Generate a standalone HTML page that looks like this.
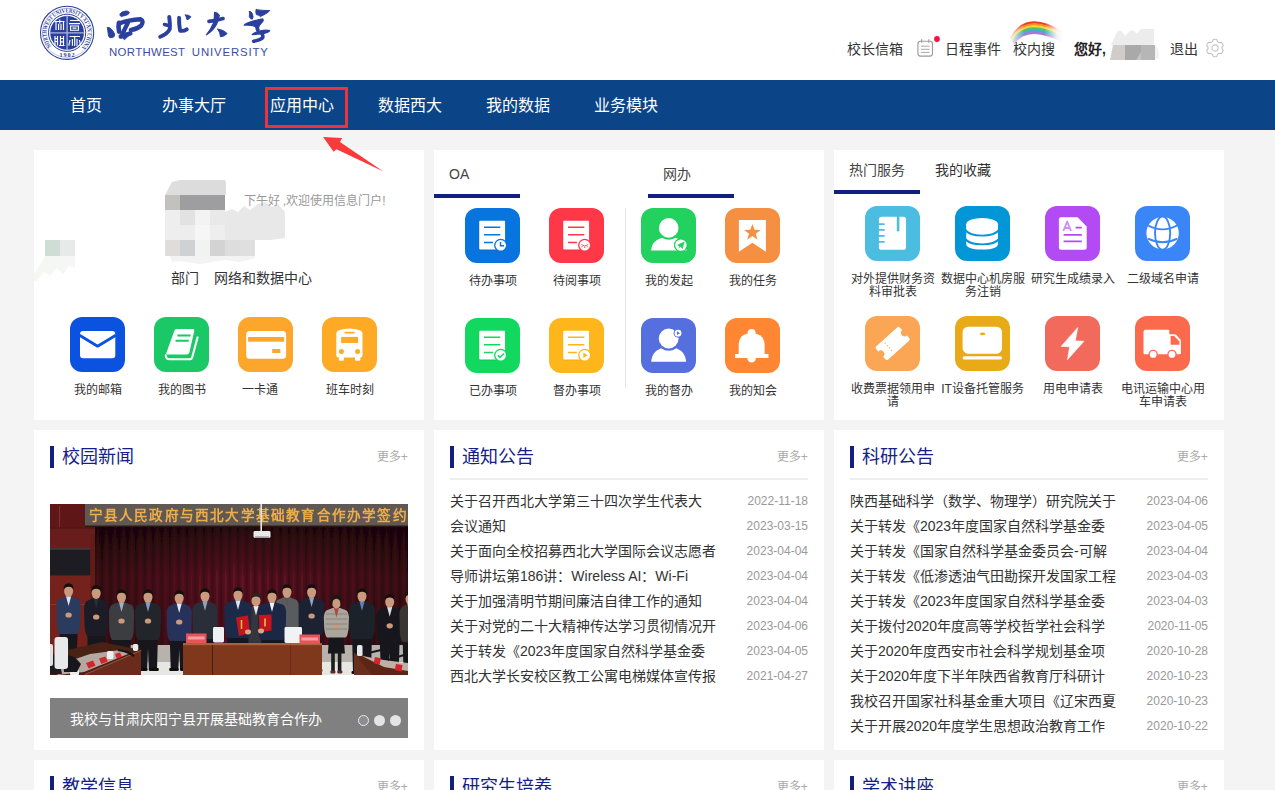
<!DOCTYPE html>
<html lang="zh-CN">
<head>
<meta charset="utf-8">
<title>西北大学信息门户</title>
<style>
*{margin:0;padding:0;box-sizing:border-box;}
html,body{width:1275px;height:790px;overflow:hidden;background:#f4f4f4;}
body{font-family:"Liberation Sans",sans-serif;color:#333;position:relative;font-size:14px;}
.abs{position:absolute;}
#hdr{position:absolute;left:0;top:0;width:1275px;height:80px;background:#fff;}
#nav{position:absolute;left:0;top:80px;width:1275px;height:50px;background:#0b4487;}
#nav span{position:absolute;top:0;height:50px;line-height:51px;font-size:16px;color:#fff;white-space:nowrap;}
.card{position:absolute;background:#fff;}
.t{position:absolute;white-space:nowrap;color:#333;}
.t14{font-size:14px;line-height:20px;height:20px;}
.t12{font-size:12px;line-height:16px;height:16px;}
.ic{position:absolute;width:55px;height:55px;border-radius:12px;overflow:hidden;}
.ic svg{position:absolute;left:0;top:0;width:55px;height:55px;display:block;}
.lb{position:absolute;width:90px;text-align:center;font-size:12px;line-height:13.6px;color:#333;}
.ul{position:absolute;height:4px;width:86px;background:#111f82;}
.hbar{position:absolute;width:4px;height:22px;background:#111f82;}
.htit{position:absolute;font-size:18px;line-height:26px;height:26px;color:#14208a;white-space:nowrap;}
.more{position:absolute;font-size:12px;line-height:16px;height:16px;color:#aaa;white-space:nowrap;}
.sep{position:absolute;height:2px;background:#eee;}
.li{position:absolute;font-size:14px;line-height:25px;height:25px;color:#333;white-space:nowrap;}
.dt{position:absolute;font-size:12px;line-height:25px;height:25px;color:#999;white-space:nowrap;text-align:right;width:80px;}
</style>
</head>
<body>
<!-- HEADER -->
<div id="hdr">
<!-- emblem -->
<svg class="abs" style="left:38px;top:3px" width="60" height="60" viewBox="0 0 60 60">
<g fill="none" stroke="#2b409e">
<circle cx="29.1" cy="29.8" r="26.6" stroke-width="1.1"/>
<circle cx="29.1" cy="29.8" r="24.6" stroke-width="0.5" opacity=".6"/>
<circle cx="29.1" cy="29.8" r="18.6" stroke-width="1"/>
</g>
<circle cx="29.1" cy="29.8" r="16.9" fill="#2b409e"/>
<g stroke="#aab3dc" stroke-width="1.3"><path d="M29.1 12.5V47.1M11.8 29.8H46.4"/></g>
<defs><path id="arcT" d="M13.9 43.6A20.4 20.4 0 1 1 44.3 43.6"/></defs>
<text font-family="Liberation Serif,serif" font-size="6.2" font-weight="bold" fill="#2b409e"><textPath href="#arcT" startOffset="0.5" textLength="94" lengthAdjust="spacingAndGlyphs">NORTHWEST UNIVERSITY XI'AN CHINA</textPath></text>
<text font-family="Liberation Serif,serif" font-size="6.2" font-weight="bold" fill="#2b409e" x="29.4" y="54.3" text-anchor="middle" letter-spacing="0.9">1902</text>
<!-- seal characters -->
<g fill="none" stroke="#fff" stroke-width="1.15">
<path d="M16.5 18.5h10M18 18.5v8.5M25.5 18.5v8.5M20.6 20.8v6.2M23 20.8v6.2M21.8 16.5v4"/>
<path d="M32 17.5h9M31 20.6h11M32.6 23v4.2h7.8V23zM34.5 25.1h4"/>
<path d="M17 33v9.5M19.5 33v9.5M17 35.5h2.5M17 38.5h2.5M22.5 33v9.5M25.5 33v9.5M22.5 35.5h3M22.5 38.8h3M21 42.5h5.5"/>
<path d="M31.5 33.5h10.5M36.7 33.5v9.5M34.4 36v6.8M32 37l-1.2 5.6M39 36v6.8M41.4 37l1.2 5.6"/>
</g>
</svg>
<!-- calligraphy 西北大学 : traced in 14.167x zoom coords -->
<svg class="abs" style="left:104px;top:6px" width="180" height="40" viewBox="0 0 2550 567">
<g fill="#2b409e" stroke="#2b409e" stroke-linecap="round" stroke-linejoin="round">
<!-- 西 -->
<path d="M228 112Q240 82 300 72Q352 64 358 92Q358 118 318 130Q270 142 242 150Q220 142 228 112Z" stroke-width="12"/>
<path d="M48 305Q72 292 112 336Q160 392 150 426Q130 456 86 450Q56 440 58 390Q50 340 48 305Z" stroke-width="12"/>
<path d="M212 238Q196 300 214 362" fill="none" stroke-width="66"/>
<path d="M210 248Q350 196 516 188Q572 214 524 280Q462 332 380 338" fill="none" stroke-width="63"/>
<path d="M338 238Q296 322 250 418" fill="none" stroke-width="61"/>
<path d="M238 432Q300 412 372 388" fill="none" stroke-width="66"/>
<path d="M262 440L360 410L292 476Z" stroke-width="14"/>
<!-- 北 -->
<path d="M924 156Q938 250 932 326Q900 396 796 436" fill="none" stroke-width="56"/>
<path d="M856 262L930 280" fill="none" stroke-width="49"/>
<path d="M1064 168Q1060 260 1078 350Q1130 360 1172 330" fill="none" stroke-width="56"/>
<path d="M1154 128Q1200 122 1230 152Q1214 186 1176 194Q1168 160 1154 128Z" stroke-width="14"/>
<!-- 大 (offset 1275) -->
<g transform="translate(1275 0)">
<path d="M212 218Q320 208 412 178" fill="none" stroke-width="51"/>
<path d="M292 92Q330 92 358 132Q348 200 318 262Q270 350 176 408Q240 330 272 250Q296 170 292 92Z" stroke-width="18"/>
<path d="M338 328Q430 340 468 392Q440 426 376 438Q372 378 338 328Z" stroke-width="14"/>
<!-- 学 -->
<path d="M786 78Q812 70 828 110Q846 160 828 186Q796 190 784 150Q790 110 786 78Z" stroke-width="14"/>
<path d="M882 52Q980 66 1074 64Q1060 92 940 150Q930 128 884 122Q868 84 882 52Z" stroke-width="14"/>
<path d="M712 272Q740 240 840 214Q930 190 972 184Q992 200 966 228Q920 262 900 320Q860 260 712 272Z" stroke-width="18"/>
<path d="M930 240Q880 290 904 338" fill="none" stroke-width="54"/>
<path d="M826 404Q860 372 940 354Q1020 336 1072 348Q1060 378 980 390Q900 402 826 404Z" stroke-width="18"/>
<path d="M962 392Q984 428 972 452Q930 486 846 500" fill="none" stroke-width="51"/>
</g>
</g>
</svg>
<div class="abs" id="nwu" style="left:109px;top:43.5px;font-size:11.4px;line-height:16px;color:#3a4da6;white-space:nowrap;letter-spacing:0.35px;">NORTHWEST<span style="letter-spacing:0.85px;margin-left:6.5px;">UNIVERSITY</span></div>
<!-- right menu -->
<div class="t t14" style="left:847px;top:39px;">校长信箱</div>
<svg class="abs" style="left:915px;top:36px" width="26" height="24" viewBox="0 0 26 24">
<rect x="2.9" y="5.3" width="14.6" height="14.8" rx="2.6" fill="#fff" stroke="#9a9a9a" stroke-width="1.1"/>
<path d="M6.6 3.2v3.6M13.8 3.2v3.6" stroke="#9a9a9a" stroke-width="1.1" fill="none"/>
<path d="M5.8 10.2h8.8M5.8 13.3h8.8M5.8 16.4h8.8" stroke="#a8a8a8" stroke-width="1" fill="none"/>
<circle cx="22" cy="3" r="2.9" fill="#f5123e"/>
</svg>
<div class="t t14" style="left:945px;top:39px;">日程事件</div>
<!-- rainbow -->
<svg class="abs" style="left:1006px;top:13.5px" width="58" height="30" viewBox="0 0 58 30">
<defs>
<linearGradient id="rbf" x1="0" x2="1" y1="0" y2="0"><stop offset="0" stop-color="#fff" stop-opacity="1"/><stop offset=".1" stop-color="#fff" stop-opacity=".8"/><stop offset=".32" stop-color="#fff" stop-opacity="0"/><stop offset=".66" stop-color="#fff" stop-opacity="0"/><stop offset=".88" stop-color="#fff" stop-opacity=".9"/><stop offset="1" stop-color="#fff" stop-opacity="1"/></linearGradient>
<filter id="rbb" x="-10%" y="-10%" width="120%" height="120%"><feGaussianBlur stdDeviation="0.6"/></filter>
</defs>
<g fill="none" stroke-width="2.5" filter="url(#rbb)">
<path d="M5.0 24.5Q20 -4.0 56 18.5" stroke="#ef3a24"/>
<path d="M5.5 25.5Q20 -1.3 56 20.1" stroke="#f6922a"/>
<path d="M6.0 26.5Q20 1.4 56 21.7" stroke="#f0d93c"/>
<path d="M6.5 27.5Q20 4.1 56 23.3" stroke="#58c06a"/>
<path d="M7.0 28.5Q20 6.8 56 24.9" stroke="#3fb0c8"/>
<path d="M7.5 29.5Q20 9.5 56 26.5" stroke="#a07bd2"/>
</g>
<rect x="0" y="0" width="58" height="30" fill="url(#rbf)"/>
</svg>
<div class="t t14" style="left:1013px;top:39px;">校内搜</div>
<div class="t t14" style="left:1074px;top:39px;font-weight:bold;color:#222;">您好,</div>
<!-- blurred name mosaic -->
<svg class="abs" style="left:1108px;top:28px" width="56" height="34" viewBox="0 0 56 34">
<path d="M3 17L9 4Q12 1 15 5L17 8L22 3Q25 1 27 4L29 6L33 1H46V17Z" fill="#ececec"/>
<rect x="2" y="17" width="15" height="15" fill="#cfccc9"/>
<rect x="17" y="17" width="16" height="15" fill="#a9a9a9"/>
<rect x="33" y="17" width="14" height="15" fill="#b6b6b6"/>
<path d="M2 32L5 17H2Z" fill="#fff"/>
<path d="M47 17Q52 22 51 30L47 32Z" fill="#f1f2f6"/>
<path d="M28 32L33 24V32Z" fill="#c4c4c4"/>
</svg>
<div class="t t14" style="left:1170px;top:39px;">退出</div>
<!-- gear -->
<svg class="abs" style="left:1204px;top:37px" width="22" height="22" viewBox="0 0 22 22">
<g fill="none" stroke="#c4c4c4" stroke-width="1.1" stroke-linejoin="round">
<path d="M9.2 2.6Q11 1.8 12.8 2.6L13.6 4.7Q14.6 5.2 15.3 5.8L17.5 5.4Q18.9 6.8 19.3 8.6L17.9 10.3Q18 11 17.9 11.7L19.3 13.4Q18.9 15.2 17.5 16.6L15.3 16.2Q14.6 16.9 13.6 17.3L12.8 19.4Q11 20.2 9.2 19.4L8.4 17.3Q7.4 16.9 6.7 16.2L4.5 16.6Q3.1 15.2 2.7 13.4L4.1 11.7Q4 11 4.1 10.3L2.7 8.6Q3.1 6.8 4.5 5.4L6.7 5.8Q7.4 5.2 8.4 4.7Z"/>
<circle cx="11" cy="11" r="3.1"/>
</g>
</svg>
</div>
<!-- NAV -->
<div id="nav">
<span style="left:70px">首页</span>
<span style="left:162px">办事大厅</span>
<span style="left:270px">应用中心</span>
<span style="left:378px">数据西大</span>
<span style="left:486px">我的数据</span>
<span style="left:594px">业务模块</span>
</div>
<div class="abs" style="left:265px;top:87px;width:83px;height:41px;border:3px solid #ee3239;"></div>
<!-- cards -->
<div class="card" style="left:34px;top:150px;width:390px;height:270px;"></div>
<div class="card" style="left:434px;top:150px;width:390px;height:270px;"></div>
<div class="card" style="left:834px;top:150px;width:390px;height:270px;"></div>
<div class="card" style="left:34px;top:430px;width:390px;height:320px;"></div>
<div class="card" style="left:434px;top:430px;width:390px;height:320px;"></div>
<div class="card" style="left:834px;top:430px;width:390px;height:320px;"></div>
<div class="card" style="left:34px;top:760px;width:390px;height:40px;"></div>
<div class="card" style="left:434px;top:760px;width:390px;height:40px;"></div>
<div class="card" style="left:834px;top:760px;width:390px;height:40px;"></div>
<!-- red arrow annotation -->
<svg class="abs" style="left:310px;top:125px" width="90" height="55" viewBox="0 0 90 55">
<path d="M13.1 12.1L32.1 13.1L30 16.9L73.4 46.6L26.5 24.3L23.6 26.8Z" fill="#fb3a3c"/>
</svg>
<!-- CARD 1 : user -->
<svg class="abs" style="left:34px;top:175px" width="260" height="110" viewBox="34 175 260 110">
<!-- avatar mosaic -->
<path d="M165 195L172 182L180 180H225L226 182V195Z" fill="#dedede"/>
<rect x="180" y="180" width="45" height="15" fill="#dcdcdc"/>
<rect x="165" y="195" width="15" height="15" fill="#c3c1bd"/>
<rect x="180" y="195" width="45" height="15" fill="#9e9ea0"/>
<rect x="165" y="210" width="15" height="30" fill="#eeeeee"/>
<rect x="180" y="210" width="15" height="15" fill="#e2e2e2"/>
<rect x="195" y="210" width="15" height="15" fill="#f3f3f3"/>
<rect x="210" y="210" width="15" height="15" fill="#e9e9e9"/>
<rect x="180" y="225" width="15" height="15" fill="#ededed"/>
<rect x="195" y="225" width="15" height="15" fill="#f5f6f5"/>
<rect x="210" y="225" width="15" height="15" fill="#eeeeee"/>
<path d="M225 240V212L232 209L238 212L244 206L250 210L258 204L266 202L272 207L278 204L285 212V238L270 240Z" fill="#e8e8e8"/>
<rect x="165" y="240" width="15" height="16" fill="#dfdddb"/>
<rect x="180" y="240" width="15" height="16" fill="#d0d1d3"/>
<rect x="195" y="240" width="15" height="16" fill="#f1f2f2"/>
<rect x="210" y="240" width="15" height="16" fill="#d3d3d3"/>
<rect x="225" y="240" width="15" height="16" fill="#dddddd"/>
<rect x="240" y="240" width="15" height="16" fill="#dfdfdf"/>
<path d="M170 256H255V258L240 262L225 260L200 264L180 261L172 262Z" fill="#f3f3f3"/>
<!-- left fragment -->
<rect x="45" y="240" width="15" height="16" fill="#cfddd7"/>
<rect x="60" y="240" width="15" height="16" fill="#e6ebea"/>
<path d="M34 274L45 256H75V268L69 266L63 274L57 268L50 276L44 272L36 281H34Z" fill="#f5f7f5"/>
</svg>
<div class="t t12" style="left:243.5px;top:192.5px;color:#999;">下午好 ,欢迎使用信息门户!</div>
<div class="t t14" style="left:171px;top:267.5px;">部门</div>
<div class="t t14" style="left:213.5px;top:267.5px;">网络和数据中心</div>
<!-- icons -->
<div class="ic" style="left:70px;top:317px;background:#0b52e0;"><svg viewBox="0 0 55 55">
<rect x="10" y="14" width="35.3" height="27.3" rx="3" fill="#fff"/>
<path d="M9.5 18.3L27.6 29.2L45.8 18.3" fill="none" stroke="#0b52e0" stroke-width="2.8" stroke-linejoin="round"/>
</svg></div>
<div class="ic" style="left:154px;top:317px;background:#1bc866;"><svg viewBox="0 0 55 55">
<path d="M22.5 12H38.5Q40.8 12 40.2 14.3L35.4 35.4Q34.9 37.4 32.8 37.4H13.8Q11.6 37.4 12.6 35.2L20.4 13.6Q21 12 22.5 12Z" fill="#fff"/>
<path d="M23.4 18.4H36.6M21.5 23.8H34.7" stroke="#1bc866" stroke-width="2" fill="none"/>
<path d="M11.8 38.4Q11.6 42.3 15.6 42.3H35.5Q37.6 42.3 38.2 40.2L43.6 20.4" fill="none" stroke="#fff" stroke-width="2.1" stroke-linecap="round"/>
</svg></div>
<div class="ic" style="left:238px;top:317px;background:#fca72c;"><svg viewBox="0 0 55 55">
<rect x="8.2" y="14" width="39.9" height="27.8" rx="3.5" fill="#fff"/>
<rect x="10.1" y="20" width="36.1" height="4.7" fill="#fca72c"/>
<rect x="34.2" y="32" width="8.1" height="4" fill="#fca72c"/>
</svg></div>
<div class="ic" style="left:322px;top:317px;background:#ffaa24;"><svg viewBox="0 0 55 55">
<path d="M14.3 16.5Q14.3 14 17 13.2Q27.4 9.8 37.8 13.2Q40.5 14 40.5 16.5V38.5Q40.5 40.6 38.4 40.6V42.7Q38.4 43.7 37.4 43.7H34Q33 43.7 33 42.7V40.6H21.9V42.7Q21.9 43.7 20.9 43.7H17.8Q16.8 43.7 16.8 42.7V40.6Q14.3 40.6 14.3 38.5Z" fill="#fff"/>
<rect x="19.1" y="19.9" width="16.9" height="6.1" fill="#ffaa24"/>
<rect x="22.3" y="14.7" width="10.4" height="1.8" rx=".9" fill="#ffaa24"/>
<circle cx="19.4" cy="34.4" r="2.5" fill="#ffaa24"/><circle cx="35.6" cy="34.4" r="2.5" fill="#ffaa24"/>
</svg></div>
<div class="t t12" style="left:73.5px;top:382px;">我的邮箱</div>
<div class="t t12" style="left:157.5px;top:382px;">我的图书</div>
<div class="t t12" style="left:241.5px;top:382px;">一卡通</div>
<div class="t t12" style="left:325.5px;top:382px;">班车时刻</div>
<!-- CARD 2 : OA / 网办 -->
<div class="t t14" style="left:449px;top:164px;color:#444;">OA</div>
<div class="ul" style="left:434px;top:194px;"></div>
<div class="t t14" style="left:663px;top:164px;color:#444;">网办</div>
<div class="ul" style="left:648px;top:194px;"></div>
<div class="abs" style="left:625px;top:208px;width:1px;height:180px;background:#e6e6e6;"></div>
<svg width="0" height="0" style="position:absolute"><defs>
<g id="doc"><rect x="14.2" y="12.7" width="25.9" height="28.8" rx="1" fill="#fff"/></g>
</defs></svg>
<!-- 待办事项 -->
<div class="ic" style="left:465px;top:208px;background:#0874de;"><svg viewBox="0 0 55 55">
<rect x="13.7" y="13.2" width="26.9" height="29.3" rx="1" fill="#0562c4" opacity=".35"/>
<use href="#doc"/>
<path d="M19 19.2H35.3M19 26.8H35.3M19 34.4H28" stroke="#0874de" stroke-width="1.5" fill="none"/>
<circle cx="35.7" cy="37.3" r="6.6" fill="#0874de"/><circle cx="35.7" cy="37.3" r="5.3" fill="#fff"/>
<path d="M35.5 34V37.8H39" stroke="#0874de" stroke-width="1.4" fill="none"/>
</svg></div>
<!-- 待阅事项 -->
<div class="ic" style="left:549px;top:208px;background:#ff3848;"><svg viewBox="0 0 55 55">
<rect x="13.7" y="13.2" width="26.9" height="29.3" rx="1" fill="#d8202f" opacity=".3"/>
<use href="#doc"/>
<path d="M19 19.2H35.3M19 26.8H35.3M19 34.4H28" stroke="#ff3848" stroke-width="1.5" fill="none"/>
<circle cx="35.7" cy="37.3" r="6.6" fill="#ff3848"/><circle cx="35.7" cy="37.3" r="5.3" fill="#fff"/>
<path d="M32.4 36.6Q35.7 39.6 39 36.6M33.3 38.2L32.6 39.3M35.7 38.8V40M38.1 38.2L38.8 39.3" stroke="#ff3848" stroke-width=".9" fill="none"/>
</svg></div>
<!-- 我的发起 -->
<div class="ic" style="left:641px;top:208px;background:#22d15e;"><svg viewBox="0 0 55 55">
<path d="M10.1 42.4Q10.6 33 21 29.8Q27.7 33.6 34.5 29.8Q45 33 45.6 42.4Z" fill="#fff"/>
<circle cx="27.7" cy="19.9" r="10.8" fill="#22d15e"/>
<circle cx="27.7" cy="19.9" r="9.8" fill="#fff"/>
<circle cx="39.9" cy="37.1" r="7" fill="#22d15e"/><circle cx="39.9" cy="37.1" r="5.7" fill="#fff"/>
<path d="M36 37L43.6 33.4L41.6 41L39.6 38.8L38.4 40.4L38.2 38.2Z" fill="#22d15e"/>
</svg></div>
<!-- 我的任务 -->
<div class="ic" style="left:725px;top:208px;background:#f59042;"><svg viewBox="0 0 55 55">
<path d="M13.9 12H40.9V43.7L27.4 34.8L13.9 43.7Z" fill="#fff"/>
<path d="M27.4 15.9L29.5 21.7L35.7 21.9L30.8 25.7L32.5 31.7L27.4 28.1L22.3 31.7L24 25.7L19.1 21.9L25.3 21.7Z" fill="#f59042"/>
</svg></div>
<!-- 已办事项 -->
<div class="ic" style="left:465px;top:318px;background:#12d85f;"><svg viewBox="0 0 55 55">
<rect x="13.7" y="13.2" width="26.9" height="29.3" rx="1" fill="#0aa848" opacity=".3"/>
<use href="#doc"/>
<path d="M19 19.2H35.3M19 26.8H35.3M19 34.4H28" stroke="#12d85f" stroke-width="1.5" fill="none"/>
<circle cx="35.7" cy="37.3" r="6.6" fill="#12d85f"/><circle cx="35.7" cy="37.3" r="5.3" fill="#fff"/>
<path d="M32.8 37.2L35 39.4L38.8 35.4" stroke="#12d85f" stroke-width="1.5" fill="none"/>
</svg></div>
<!-- 督办事项 -->
<div class="ic" style="left:549px;top:318px;background:#ffb61a;"><svg viewBox="0 0 55 55">
<rect x="13.7" y="13.2" width="26.9" height="29.3" rx="1" fill="#e09400" opacity=".3"/>
<use href="#doc"/>
<path d="M19 19.2H35.3M19 26.8H35.3M19 34.4H28" stroke="#ffb61a" stroke-width="1.5" fill="none"/>
<circle cx="35.7" cy="37.3" r="6.6" fill="#ffb61a"/><circle cx="35.7" cy="37.3" r="5.3" fill="#fff"/>
<path d="M34.3 34.6L38.6 37.3L34.3 40Z" fill="#ffb61a"/>
</svg></div>
<!-- 我的督办 -->
<div class="ic" style="left:641px;top:318px;background:#566fdf;"><svg viewBox="0 0 55 55">
<path d="M10.1 43.7Q10.8 34 20 30.2Q27.7 35.2 35.4 30.2Q44.5 34 45.2 43.7Z" fill="#fff"/>
<circle cx="27.7" cy="20.5" r="10.9" fill="#566fdf"/>
<circle cx="27.7" cy="20.5" r="9.9" fill="#fff"/>
<circle cx="37" cy="15.2" r="4.4" fill="#566fdf"/><circle cx="37" cy="15.2" r="3.4" fill="#fff"/>
<path d="M36 13.3L39 15.2L36 17.1Z" fill="#566fdf"/>
</svg></div>
<!-- 我的知会 -->
<div class="ic" style="left:725px;top:318px;background:#ff8733;"><svg viewBox="0 0 55 55">
<circle cx="26.6" cy="15" r="4" fill="#fff"/>
<path d="M13.7 37V27.5Q13.7 15.2 26.6 15.2Q39.6 15.2 39.6 27.5V37Z" fill="#fff"/>
<rect x="10.1" y="36" width="33.4" height="4" fill="#fff"/>
<circle cx="26.6" cy="40.4" r="4.2" fill="#fff"/>
</svg></div>
<div class="t t12" style="left:468.5px;top:273px;">待办事项</div>
<div class="t t12" style="left:552.5px;top:273px;">待阅事项</div>
<div class="t t12" style="left:644.5px;top:273px;">我的发起</div>
<div class="t t12" style="left:728.5px;top:273px;">我的任务</div>
<div class="t t12" style="left:468.5px;top:383px;">已办事项</div>
<div class="t t12" style="left:552.5px;top:383px;">督办事项</div>
<div class="t t12" style="left:644.5px;top:383px;">我的督办</div>
<div class="t t12" style="left:728.5px;top:383px;">我的知会</div>
<!-- CARD 3 : 热门服务 -->
<div class="t t14" style="left:849px;top:160px;color:#444;">热门服务</div>
<div class="t t14" style="left:935px;top:160px;color:#333;">我的收藏</div>
<div class="ul" style="left:834px;top:190px;"></div>
<!-- notebook -->
<div class="ic" style="left:865px;top:206px;background:#4bbde0;"><svg viewBox="0 0 55 55">
<rect x="13.9" y="10.7" width="27.1" height="33.1" rx="2.6" fill="#fff"/>
<path d="M12.5 18.2H19M12.5 23.9H19M12.5 29.8H19M12.5 35.8H19" stroke="#4bbde0" stroke-width="1.7" fill="none" stroke-linecap="round"/>
<path d="M33.1 10V24.2" stroke="#4bbde0" stroke-width="2.6" fill="none" stroke-linecap="round"/>
</svg></div>
<!-- database -->
<div class="ic" style="left:955px;top:206px;background:#0296d6;"><svg viewBox="0 0 55 55">
<path d="M11.2 18V37.5Q11.2 43.6 27.1 43.6Q43 43.6 43 37.5V18Z" fill="#fff"/>
<ellipse cx="27.1" cy="18.2" rx="15.9" ry="6.3" fill="#fff"/>
<path d="M10 23.6Q14 29.6 27.1 29.6Q40.2 29.6 44.2 23.6" fill="none" stroke="#0296d6" stroke-width="1.9"/>
<path d="M10 32.6Q14 38.4 27.1 38.4Q40.2 38.4 44.2 32.6" fill="none" stroke="#0296d6" stroke-width="1.9"/>
</svg></div>
<!-- doc A -->
<div class="ic" style="left:1045px;top:206px;background:#b24bf3;"><svg viewBox="0 0 55 55">
<path d="M15.9 11.2H32.6L41.7 20.6V41.8Q41.7 43.8 39.7 43.8H15.9Q13.9 43.8 13.9 41.8V13.2Q13.9 11.2 15.9 11.2Z" fill="#fff"/>
<path d="M18.6 28.9H36.8M18.6 35.3H36.8" stroke="#b24bf3" stroke-width="1.8" fill="none"/>
<path d="M30.6 21.6H36.8" stroke="#b24bf3" stroke-width="1.8" fill="none"/>
<path d="M18.4 25L22.2 15.6L26 25M19.8 22H24.6" stroke="#cf8ff8" stroke-width="1.9" fill="none" stroke-linejoin="round"/>
</svg></div>
<!-- globe -->
<div class="ic" style="left:1135px;top:206px;background:#3b86f7;"><svg viewBox="0 0 55 55">
<circle cx="27.6" cy="27.1" r="16.2" fill="#fff"/>
<g fill="none" stroke="#3b86f7" stroke-width="1.9">
<ellipse cx="27.6" cy="27.1" rx="7.6" ry="16.6"/>
<path d="M13 19.4Q27.6 27.4 42.2 19.4"/>
<path d="M13 34.6Q27.6 42 42.2 34.6" transform="translate(0,-2)"/>
</g>
</svg></div>
<!-- ticket -->
<div class="ic" style="left:865px;top:316px;background:#fba655;"><svg viewBox="0 0 55 55">
<g transform="rotate(-42 27.6 27.4)">
<path d="M13.6 18.6H41.6Q43.6 18.6 43.6 20.6V23.9A3.6 3.6 0 0 0 43.6 31.1V34.4Q43.6 36.4 41.6 36.4H13.6Q11.6 36.4 11.6 34.4V31.1A3.6 3.6 0 0 0 11.6 23.9V20.6Q11.6 18.6 13.6 18.6Z" fill="#fff"/>
<path d="M22.2 21.6V34" stroke="#fba655" stroke-width="1.1" stroke-dasharray="1.3 1.9" fill="none"/>
</g>
</svg></div>
<!-- laptop -->
<div class="ic" style="left:955px;top:316px;background:#e9aa17;"><svg viewBox="0 0 55 55">
<rect x="7.6" y="10.7" width="39.4" height="27" rx="5.4" fill="#fff"/>
<ellipse cx="27.6" cy="17.9" rx="2.6" ry="1.4" fill="#e9aa17"/>
<rect x="7.6" y="40.2" width="39.4" height="3.4" rx="1.7" fill="#fff"/>
</svg></div>
<!-- lightning -->
<div class="ic" style="left:1045px;top:316px;background:#f16a5c;"><svg viewBox="0 0 55 55">
<path d="M32.8 11.5L16.1 30.4L24.6 30.8L22.4 43.8L39 25.2L30.3 24.9Z" fill="#fff" stroke="#fff" stroke-width=".6" stroke-linejoin="round"/>
</svg></div>
<!-- truck -->
<div class="ic" style="left:1135px;top:316px;background:#fb6a4c;"><svg viewBox="0 0 55 55">
<path d="M10.5 13.7H33.3Q34.3 13.7 34.3 14.7V18.2H39.6Q40.6 18.2 41.4 19L45.2 23.2Q45.9 24 45.9 25V37.3Q45.9 38.3 44.9 38.3H9.5Q8.5 38.3 8.5 37.3V15.7Q8.5 13.7 10.5 13.7Z" fill="#fff"/>
<path d="M35.6 20H39.2L44.4 25.4V28.8H35.6Z" fill="#fb6a4c"/>
<circle cx="18.2" cy="38.4" r="4.7" fill="#fb6a4c"/><circle cx="18.2" cy="38.4" r="3.4" fill="#fff"/>
<circle cx="37" cy="38.4" r="4.7" fill="#fb6a4c"/><circle cx="37" cy="38.4" r="3.4" fill="#fff"/>
</svg></div>
<div class="lb" style="left:847.5px;top:272.5px;">对外提供财务资料审批表</div>
<div class="lb" style="left:937.5px;top:272.5px;">数据中心机房服务注销</div>
<div class="lb" style="left:1027.5px;top:272.5px;">研究生成绩录入</div>
<div class="lb" style="left:1117.5px;top:272.5px;">二级域名申请</div>
<div class="lb" style="left:847.5px;top:382.5px;">收费票据领用申请</div>
<div class="lb" style="left:937.5px;top:382.5px;">IT设备托管服务</div>
<div class="lb" style="left:1027.5px;top:382.5px;">用电申请表</div>
<div class="lb" style="left:1117.5px;top:382.5px;">电讯运输中心用车申请表</div>
<!-- NEWS PHOTO -->
<svg class="abs" style="left:50px;top:504px" width="358" height="171" viewBox="0 0 358 171">
<defs>
<linearGradient id="cur" x1="0" x2="1" y1="0" y2="0"><stop offset="0" stop-color="#380a12"/><stop offset=".45" stop-color="#54111e"/><stop offset=".75" stop-color="#470e19"/><stop offset="1" stop-color="#360911"/></linearGradient>
<linearGradient id="curv" x1="0" x2="0" y1="0" y2="1"><stop offset="0" stop-color="#000" stop-opacity=".62"/><stop offset=".12" stop-color="#000" stop-opacity=".4"/><stop offset=".45" stop-color="#000" stop-opacity="0"/><stop offset="1" stop-color="#000" stop-opacity=".12"/></linearGradient>
<pattern id="fold" width="8.5" height="10" patternUnits="userSpaceOnUse"><rect width="8.5" height="10" fill="none"/><rect x="0" width="2.2" height="10" fill="#000" opacity=".22"/><rect x="4.6" width="1.6" height="10" fill="#a02838" opacity=".16"/></pattern>
<filter id="pb" x="-2%" y="-2%" width="104%" height="104%"><feGaussianBlur stdDeviation="0.55"/></filter>
<clipPath id="pc"><rect width="358" height="171"/></clipPath>
</defs>
<g clip-path="url(#pc)"><g filter="url(#pb)">
<rect width="358" height="171" fill="#dcdcd8"/>
<rect x="0" y="136" width="358" height="23" fill="#b7b3ac"/>
<rect x="0" y="158" width="358" height="15" fill="#e6e6e3"/>
<rect x="44" y="20" width="316" height="121" fill="url(#cur)"/>
<rect x="44" y="20" width="316" height="121" fill="url(#fold)"/>
<rect x="44" y="20" width="316" height="121" fill="url(#curv)"/>
<rect x="0" y="0" width="45" height="150" fill="#76231c"/>
<rect x="0" y="0" width="45" height="24" fill="#5e1718"/><rect x="0" y="24.5" width="45" height="19" fill="#681c1c"/>
<rect x="9" y="2" width="1" height="21" fill="#8e3a30" opacity=".7"/><rect x="0" y="23.5" width="45" height="1.2" fill="#4a1012"/>
<rect x="0" y="44.5" width="40.5" height="27" fill="#1d1f21"/><rect x="0" y="44.5" width="40.5" height="1" fill="#44474a"/>
<rect x="40.5" y="30" width="4.5" height="115" fill="#621a18"/>
<rect x="0" y="100" width="45" height="1" fill="#a0402c" opacity=".6"/>
<rect x="35" y="0" width="323" height="22.5" fill="#5f5953"/>
<rect x="35" y="21.5" width="323" height="1.6" fill="#2a1712"/>
<text x="38.5" y="15.9" font-family="Liberation Serif,serif" font-weight="bold" font-size="13.6" fill="#efad4a" textLength="318" lengthAdjust="spacing">宁县人民政府与西北大学基础教育合作办学签约</text>
<rect x="210.4" y="0" width="1.6" height="27" fill="#e4e4e4"/><rect x="203.5" y="27" width="17" height="7" rx="1.4" fill="#e9e9ea"/><rect x="205" y="32.4" width="14" height="1.6" fill="#9a9a9a"/>
<path d="M199.0 133.6L200.0 150H205.2L206 147.6L206.8 150H212.0L213.0 133.6Z" fill="#16171d"/><rect x="198.5" y="148" width="7.0" height="3" rx="1.2" fill="#0c0c0e"/><rect x="206.8" y="148" width="7.0" height="3" rx="1.2" fill="#0c0c0e"/><path d="M199.5 104.1Q196.5 105.1 195.9 111.1L196.3 130.6Q197.5 139.6 199.5 139.6H212.5Q214.5 139.6 215.7 130.6L216.1 111.1Q215.5 105.1 212.5 104.1L209 101.89999999999999H203Z" fill="#34353a"/><path d="M203.4 101.89999999999999L206 111.6L208.6 101.89999999999999Z" fill="#e9e9ee"/><ellipse cx="206" cy="96.6" rx="4.5" ry="6" fill="#c99a7d"/><path d="M201.1 95.6Q200.6 89.1 206 88.89999999999999Q211.4 89.1 210.9 95.6Q209.6 92.39999999999999 206 92.39999999999999Q202.4 92.39999999999999 201.1 95.6Z" fill="#2a2320"/>
<path d="M9.600000000000001 124L10.600000000000001 167H17.8L18.6 138L19.400000000000002 167H26.6L27.6 124Z" fill="#16171d"/><rect x="9.100000000000001" y="165" width="9.0" height="3" rx="1.2" fill="#0c0c0e"/><rect x="19.400000000000002" y="165" width="9.0" height="3" rx="1.2" fill="#0c0c0e"/><path d="M10.100000000000001 94.5Q7.100000000000001 95.5 6.500000000000002 101.5L6.900000000000001 121Q8.100000000000001 130 10.100000000000001 130H27.1Q29.1 130 30.3 121L30.700000000000003 101.5Q30.1 95.5 27.1 94.5L21.6 92.3H15.600000000000001Z" fill="#2b3a5d"/><path d="M16.0 92.3L18.6 102.0L21.200000000000003 92.3Z" fill="#dfe3ea"/><ellipse cx="18.6" cy="111" rx="3.2" ry="2.6" fill="#c99a7d"/><ellipse cx="18.6" cy="87" rx="4.5" ry="6" fill="#c99a7d"/><path d="M13.700000000000001 86Q13.200000000000001 79.5 18.6 79.3Q24.0 79.5 23.5 86Q22.200000000000003 82.8 18.6 82.8Q15.000000000000002 82.8 13.700000000000001 86Z" fill="#17110f"/>
<path d="M37.2 126L38.2 167H45.400000000000006L46.2 140L47.0 167H54.2L55.2 126Z" fill="#16171d"/><rect x="36.7" y="165" width="9.0" height="3" rx="1.2" fill="#0c0c0e"/><rect x="47.0" y="165" width="9.0" height="3" rx="1.2" fill="#0c0c0e"/><path d="M37.7 96.5Q34.7 97.5 34.1 103.5L34.5 123Q35.7 132 37.7 132H54.7Q56.7 132 57.900000000000006 123L58.300000000000004 103.5Q57.7 97.5 54.7 96.5L49.2 94.3H43.2Z" fill="#1c1f28"/><path d="M43.6 94.3L46.2 104.0L48.800000000000004 94.3Z" fill="#2b2d36"/><ellipse cx="46.2" cy="113" rx="3.2" ry="2.6" fill="#c99a7d"/><ellipse cx="46.2" cy="89" rx="4.5" ry="6" fill="#c99a7d"/><path d="M41.300000000000004 88Q40.800000000000004 81.5 46.2 81.3Q51.6 81.5 51.1 88Q49.800000000000004 84.8 46.2 84.8Q42.6 84.8 41.300000000000004 88Z" fill="#17110f"/>
<path d="M62.0 130L63.0 167H70.7L71.5 144L72.3 167H80.0L81.0 130Z" fill="#16171d"/><rect x="61.5" y="165" width="9.5" height="3" rx="1.2" fill="#0c0c0e"/><rect x="72.3" y="165" width="9.5" height="3" rx="1.2" fill="#0c0c0e"/><path d="M62.5 100.5Q59.5 101.5 58.9 107.5L59.3 127Q60.5 136 62.5 136H80.5Q82.5 136 83.7 127L84.1 107.5Q83.5 101.5 80.5 100.5L74.5 98.3H68.5Z" fill="#3b3c41"/><path d="M68.9 98.3L71.5 108.0L74.1 98.3Z" fill="#9fb0c8"/><ellipse cx="71.5" cy="117" rx="3.2" ry="2.6" fill="#c99a7d"/><ellipse cx="71.5" cy="93" rx="4.5" ry="6" fill="#c99a7d"/><path d="M66.6 92Q66.1 85.5 71.5 85.3Q76.9 85.5 76.4 92Q75.1 88.8 71.5 88.8Q67.9 88.8 66.6 92Z" fill="#17110f"/>
<path d="M88.0 130L89.0 166H97.2L98 144L98.8 166H107.0L108.0 130Z" fill="#16171d"/><rect x="87.5" y="164" width="10.0" height="3" rx="1.2" fill="#0c0c0e"/><rect x="98.8" y="164" width="10.0" height="3" rx="1.2" fill="#0c0c0e"/><path d="M88.5 100.5Q85.5 101.5 84.9 107.5L85.3 127Q86.5 136 88.5 136H107.5Q109.5 136 110.7 127L111.1 107.5Q110.5 101.5 107.5 100.5L101 98.3H95Z" fill="#24252c"/><path d="M95.4 98.3L98 108.0L100.6 98.3Z" fill="#7f9ac8"/><ellipse cx="98" cy="117" rx="3.2" ry="2.6" fill="#c99a7d"/><ellipse cx="98" cy="93" rx="4.5" ry="6" fill="#c99a7d"/><path d="M93.1 92Q92.6 85.5 98 85.3Q103.4 85.5 102.9 92Q101.6 88.8 98 88.8Q94.4 88.8 93.1 92Z" fill="#17110f"/>
<path d="M119.69999999999999 131L120.69999999999999 166H128.39999999999998L129.2 145L130.0 166H137.7L138.7 131Z" fill="#16171d"/><rect x="119.19999999999999" y="164" width="9.5" height="3" rx="1.2" fill="#0c0c0e"/><rect x="130.0" y="164" width="9.5" height="3" rx="1.2" fill="#0c0c0e"/><path d="M120.19999999999999 101.5Q117.19999999999999 102.5 116.6 108.5L116.99999999999999 128Q118.19999999999999 137 120.19999999999999 137H138.2Q140.2 137 141.39999999999998 128L141.79999999999998 108.5Q141.2 102.5 138.2 101.5L132.2 99.3H126.19999999999999Z" fill="#26335a"/><path d="M126.6 99.3L129.2 109.0L131.79999999999998 99.3Z" fill="#e6e8ee"/><ellipse cx="129.2" cy="118" rx="3.2" ry="2.6" fill="#c99a7d"/><ellipse cx="129.2" cy="94" rx="4.5" ry="6" fill="#c99a7d"/><path d="M124.29999999999998 93Q123.79999999999998 86.5 129.2 86.3Q134.6 86.5 134.1 93Q132.79999999999998 89.8 129.2 89.8Q125.6 89.8 124.29999999999998 93Z" fill="#17110f"/>
<path d="M145.5 129L146.5 167H154.2L155 143L155.8 167H163.5L164.5 129Z" fill="#16171d"/><rect x="145.0" y="165" width="9.5" height="3" rx="1.2" fill="#0c0c0e"/><rect x="155.8" y="165" width="9.5" height="3" rx="1.2" fill="#0c0c0e"/><path d="M146.0 99.5Q143.0 100.5 142.4 106.5L142.8 126Q144.0 135 146.0 135H164.0Q166.0 135 167.2 126L167.6 106.5Q167.0 100.5 164.0 99.5L158 97.3H152Z" fill="#2b2d38"/><path d="M152.4 97.3L155 107.0L157.6 97.3Z" fill="#8ea2c0"/><ellipse cx="155" cy="92" rx="4.5" ry="6" fill="#c99a7d"/><path d="M150.1 91Q149.6 84.5 155 84.3Q160.4 84.5 159.9 91Q158.6 87.8 155 87.8Q151.4 87.8 150.1 91Z" fill="#17110f"/>
<path d="M228.0 125L229.0 167H236.2L237 139L237.8 167H245.0L246.0 125Z" fill="#16171d"/><rect x="227.5" y="165" width="9.0" height="3" rx="1.2" fill="#0c0c0e"/><rect x="237.8" y="165" width="9.0" height="3" rx="1.2" fill="#0c0c0e"/><path d="M228.5 95.5Q225.5 96.5 224.9 102.5L225.3 122Q226.5 131 228.5 131H245.5Q247.5 131 248.7 122L249.1 102.5Q248.5 96.5 245.5 95.5L240 93.3H234Z" fill="#595c5e"/><path d="M234.4 93.3L237 103.0L239.6 93.3Z" fill="#55585a"/><ellipse cx="237" cy="88" rx="4.5" ry="6" fill="#c99a7d"/><path d="M232.1 87Q231.6 80.5 237 80.3Q242.4 80.5 241.9 87Q240.6 83.8 237 83.8Q233.4 83.8 232.1 87Z" fill="#17110f"/>
<path d="M251.60000000000002 125L252.60000000000002 167H260.8L261.6 139L262.40000000000003 167H270.6L271.6 125Z" fill="#16171d"/><rect x="251.10000000000002" y="165" width="10.0" height="3" rx="1.2" fill="#0c0c0e"/><rect x="262.40000000000003" y="165" width="10.0" height="3" rx="1.2" fill="#0c0c0e"/><path d="M252.10000000000002 95.5Q249.10000000000002 96.5 248.50000000000003 102.5L248.90000000000003 122Q250.10000000000002 131 252.10000000000002 131H271.1Q273.1 131 274.3 122L274.70000000000005 102.5Q274.1 96.5 271.1 95.5L264.6 93.3H258.6Z" fill="#1b2132"/><path d="M259.0 93.3L261.6 103.0L264.20000000000005 93.3Z" fill="#93a3bd"/><ellipse cx="261.6" cy="112" rx="3.2" ry="2.6" fill="#c99a7d"/><ellipse cx="261.6" cy="88" rx="4.5" ry="6" fill="#c99a7d"/><path d="M256.70000000000005 87Q256.20000000000005 80.5 261.6 80.3Q267.0 80.5 266.5 87Q265.20000000000005 83.8 261.6 83.8Q258.0 83.8 256.70000000000005 87Z" fill="#17110f"/>
<path d="M279.4 129.5L277.9 149.5H294.9L293.4 129.5Z" fill="#15151a"/><rect x="281.2" y="148.5" width="3.6" height="20.5" fill="#1a1a1e"/><rect x="287.79999999999995" y="148.5" width="3.6" height="20.5" fill="#1a1a1e"/><rect x="280.4" y="166.5" width="5" height="3" rx="1" fill="#5a2c22"/><rect x="287.4" y="166.5" width="5" height="3" rx="1" fill="#5a2c22"/><path d="M277.4 106.0Q274.4 107.0 273.79999999999995 113.0L274.2 124.5Q275.4 133.5 277.4 133.5H295.4Q297.4 133.5 298.59999999999997 124.5L299.0 113.0Q298.4 107.0 295.4 106.0L289.4 103.8H283.4Z" fill="#aaa69d"/><path d="M283.79999999999995 103.8L286.4 113.5L289.0 103.8Z" fill="#b4463f"/><ellipse cx="286.4" cy="122.5" rx="3.2" ry="2.6" fill="#c99a7d"/><ellipse cx="286.4" cy="98.5" rx="4.5" ry="6" fill="#c99a7d"/><path d="M280.79999999999995 101.5Q280.0 90.9 286.4 90.7Q292.79999999999995 90.9 292.0 101.5L290.4 100.5Q290.59999999999997 94.9 286.4 94.7Q282.2 94.9 282.4 100.5Z" fill="#1d1513"/>
<path d="M302.0 129L303.0 169H311.2L312 143L312.8 169H321.0L322.0 129Z" fill="#16171d"/><rect x="301.5" y="167" width="10.0" height="3" rx="1.2" fill="#0c0c0e"/><rect x="312.8" y="167" width="10.0" height="3" rx="1.2" fill="#0c0c0e"/><path d="M302.5 99.5Q299.5 100.5 298.9 106.5L299.3 126Q300.5 135 302.5 135H321.5Q323.5 135 324.7 126L325.1 106.5Q324.5 100.5 321.5 99.5L315 97.3H309Z" fill="#1d212c"/><path d="M309.4 97.3L312 107.0L314.6 97.3Z" fill="#5f7fb4"/><ellipse cx="312" cy="92" rx="4.5" ry="6" fill="#c99a7d"/><path d="M307.1 91Q306.6 84.5 312 84.3Q317.4 84.5 316.9 91Q315.6 87.8 312 87.8Q308.4 87.8 307.1 91Z" fill="#17110f"/>
<path d="M329.7 134.8L330.7 165H338.9L339.7 148.8L340.5 165H348.7L349.7 134.8Z" fill="#16171d"/><rect x="329.2" y="163" width="10.0" height="3" rx="1.2" fill="#0c0c0e"/><rect x="340.5" y="163" width="10.0" height="3" rx="1.2" fill="#0c0c0e"/><path d="M330.2 105.3Q327.2 106.3 326.59999999999997 112.3L327.0 131.8Q328.2 140.8 330.2 140.8H349.2Q351.2 140.8 352.4 131.8L352.8 112.3Q352.2 106.3 349.2 105.3L342.7 103.1H336.7Z" fill="#16171b"/><path d="M337.09999999999997 103.1L339.7 112.8L342.3 103.1Z" fill="#dcdce0"/><ellipse cx="339.7" cy="121.8" rx="3.2" ry="2.6" fill="#c99a7d"/><ellipse cx="339.7" cy="97.8" rx="4.5" ry="6" fill="#c99a7d"/><path d="M334.8 96.8Q334.3 90.3 339.7 90.1Q345.09999999999997 90.3 344.59999999999997 96.8Q343.3 93.6 339.7 93.6Q336.09999999999997 93.6 334.8 96.8Z" fill="#17110f"/>
<path d="M352.5 132L353.5 167H359.2L360 146L360.8 167H366.5L367.5 132Z" fill="#16171d"/><rect x="352.0" y="165" width="7.5" height="3" rx="1.2" fill="#0c0c0e"/><rect x="360.8" y="165" width="7.5" height="3" rx="1.2" fill="#0c0c0e"/><path d="M353.0 102.5Q350.0 103.5 349.4 109.5L349.8 129Q351.0 138 353.0 138H367.0Q369.0 138 370.2 129L370.6 109.5Q370.0 103.5 367.0 102.5L363 100.3H357Z" fill="#3a3630"/><path d="M357.4 100.3L360 110.0L362.6 100.3Z" fill="#e9e9ee"/><ellipse cx="360" cy="95" rx="4.5" ry="6" fill="#c99a7d"/><path d="M355.1 94Q354.6 87.5 360 87.3Q365.4 87.5 364.9 94Q363.6 90.8 360 90.8Q356.4 90.8 355.1 94Z" fill="#17110f"/>
<path d="M177.5 128L178.5 167H187.2L188 142L188.8 167H197.5L198.5 128Z" fill="#16171d"/><rect x="177.0" y="165" width="10.5" height="3" rx="1.2" fill="#0c0c0e"/><rect x="188.8" y="165" width="10.5" height="3" rx="1.2" fill="#0c0c0e"/><path d="M178.0 98.5Q175.0 99.5 174.4 105.5L174.8 125Q176.0 134 178.0 134H198.0Q200.0 134 201.2 125L201.6 105.5Q201.0 99.5 198.0 98.5L191 96.3H185Z" fill="#1e2948"/><path d="M185.4 96.3L188 106.0L190.6 96.3Z" fill="#dfe3ec"/><ellipse cx="188" cy="91" rx="4.5" ry="6" fill="#c99a7d"/><path d="M183.1 90Q182.6 83.5 188 83.3Q193.4 83.5 192.9 90Q191.6 86.8 188 86.8Q184.4 86.8 183.1 90Z" fill="#17110f"/>
<path d="M211.0 130L212.0 167H221.2L222 144L222.8 167H232.0L233.0 130Z" fill="#16171d"/><rect x="210.5" y="165" width="11.0" height="3" rx="1.2" fill="#0c0c0e"/><rect x="222.8" y="165" width="11.0" height="3" rx="1.2" fill="#0c0c0e"/><path d="M211.5 100.5Q208.5 101.5 207.9 107.5L208.3 127Q209.5 136 211.5 136H232.5Q234.5 136 235.7 127L236.1 107.5Q235.5 101.5 232.5 100.5L225 98.3H219Z" fill="#1c2645"/><path d="M219.4 98.3L222 108.0L224.6 98.3Z" fill="#f4f4f6"/><ellipse cx="222" cy="93" rx="4.5" ry="6" fill="#c99a7d"/><path d="M217.1 92Q216.6 85.5 222 85.3Q227.4 85.5 226.9 92Q225.6 88.8 222 88.8Q218.4 88.8 217.1 92Z" fill="#17110f"/>
<path d="M276 110h21M275.5 115h22M275.5 120h22M276 125h21" stroke="#6f6c66" stroke-width="1.1" opacity=".55" fill="none"/>
<path d="M186 113.5L198 111.5L200 129L189 132Z" fill="#c4161f"/><path d="M209 111L221.5 110.5L221.5 126.5L209.5 128Z" fill="#c4161f"/>
<path d="M191.5 116v9M215 114.5v8" stroke="#f0c24a" stroke-width="1.5" fill="none"/>
<ellipse cx="198" cy="128" rx="3" ry="2.4" fill="#d8a988"/><ellipse cx="211" cy="127" rx="3" ry="2.4" fill="#d8a988"/>
<rect x="133" y="139" width="139" height="33" fill="#80371f"/><rect x="133" y="139" width="139" height="2.2" fill="#a8603e"/><rect x="162" y="141" width="1" height="31" fill="#4e1d12"/><rect x="240" y="141" width="1" height="31" fill="#5a2416" opacity=".6"/>
<rect x="136" y="129.5" width="20.5" height="9.5" fill="#e8525a"/><rect x="138" y="132.5" width="16.5" height="3" fill="#f3b2b2" opacity=".8"/>
<rect x="163" y="123" width="11" height="15.5" rx="1.4" fill="#eff0f2"/>
<rect x="234.5" y="123" width="17.5" height="16" rx="1.4" fill="#f1f2f4"/>
<rect x="249.5" y="130.5" width="20.5" height="9.5" fill="#e8525a"/><rect x="251.5" y="133.5" width="16.5" height="3" fill="#f3b2b2" opacity=".8"/>
<path d="M0 150L52 138L91 146L91 171L0 171Z" fill="#4a2116"/>
<path d="M35 171L91 147V171Z" fill="#6a2b1b"/><path d="M35 170.5L91 146.5" stroke="#9a5236" stroke-width="1.2"/>
<path d="M2 163L40 150L70 146L78 150L34 168L8 171Z" fill="#d9d6d0" opacity=".75"/>
<path d="M36 159l7-2.4 2.6 5.2-7 2.6zM49 154.5l6.4-2 2.4 5-6.6 2.4zM65 150l5-1.6 2 4.4-5.2 1.8z" fill="#d4262c"/>
<rect x="20" y="165" width="9" height="7" rx="2" fill="#ededed"/><rect x="57" y="147" width="6.5" height="8" rx="1.6" fill="#f0f0f0"/><rect x="83" y="140" width="5" height="7" rx="1.4" fill="#ececec"/>
<path d="M13 153Q22 148 31 160L27 168H14Z" fill="#17171a"/><path d="M0 150Q8 148 12 170H0Z" fill="#1c1b1e"/>
<path d="M68 146L78 148L84 152" stroke="#141416" stroke-width="2.2" fill="none"/>
<rect x="4.5" y="133" width="13.5" height="32" rx="3" fill="#e9e9ec"/><rect x="-3" y="140" width="6" height="22" rx="2" fill="#e0e0e4"/>
<path d="M304 149L330 156L358 160V171H304Z" fill="#5c2718"/><path d="M304 149V171H322Z" fill="#6b2d1c"/>
<path d="M312 152L334 156L358 159V167L334 163Z" fill="#d8d4cc" opacity=".8"/>
<rect x="307" y="141" width="5.5" height="11" rx="1.6" fill="#e6e8ea"/>
<path d="M325 153l6 1.2-1.4 6.6-6-1.6zM346 160l6.6 1-1.2 6.4-6.6-1.4z" fill="#d4262c"/>
<path d="M314 150L331 146M338 156L354 151" stroke="#19191c" stroke-width="2" fill="none"/>
</g></g>
</svg>
<!-- ROW 2 titles -->
<div class="hbar" style="left:50px;top:446px;"></div><div class="htit" style="left:62px;top:444.2px;">校园新闻</div><div class="more" style="left:376.8px;top:449px;">更多+</div>
<div class="hbar" style="left:450px;top:446px;"></div><div class="htit" style="left:462px;top:444.2px;">通知公告</div><div class="more" style="left:776.8px;top:449px;">更多+</div>
<div class="hbar" style="left:850px;top:446px;"></div><div class="htit" style="left:862px;top:444.2px;">科研公告</div><div class="more" style="left:1176.8px;top:449px;">更多+</div>
<div class="sep" style="left:450px;top:478px;width:358px;"></div>
<div class="sep" style="left:850px;top:478px;width:358px;"></div>
<!-- list 1 -->
<div class="li" style="left:450px;top:489px;">关于召开西北大学第三十四次学生代表大</div><div class="dt" style="left:728px;top:488.5px;">2022-11-18</div>
<div class="li" style="left:450px;top:514px;">会议通知</div><div class="dt" style="left:728px;top:513.5px;">2023-03-15</div>
<div class="li" style="left:450px;top:539px;">关于面向全校招募西北大学国际会议志愿者</div><div class="dt" style="left:728px;top:538.5px;">2023-04-04</div>
<div class="li" style="left:450px;top:564px;">导师讲坛第186讲：Wireless AI：Wi-Fi</div><div class="dt" style="left:728px;top:563.5px;">2023-04-04</div>
<div class="li" style="left:450px;top:589px;">关于加强清明节期间廉洁自律工作的通知</div><div class="dt" style="left:728px;top:588.5px;">2023-04-04</div>
<div class="li" style="left:450px;top:614px;">关于对党的二十大精神传达学习贯彻情况开</div><div class="dt" style="left:728px;top:613.5px;">2023-04-06</div>
<div class="li" style="left:450px;top:639px;">关于转发《2023年度国家自然科学基金委</div><div class="dt" style="left:728px;top:638.5px;">2023-04-05</div>
<div class="li" style="left:450px;top:664px;">西北大学长安校区教工公寓电梯媒体宣传报</div><div class="dt" style="left:728px;top:663.5px;">2021-04-27</div>
<!-- list 2 -->
<div class="li" style="left:850px;top:489px;">陕西基础科学（数学、物理学）研究院关于</div><div class="dt" style="left:1128px;top:488.5px;">2023-04-06</div>
<div class="li" style="left:850px;top:514px;">关于转发《2023年度国家自然科学基金委</div><div class="dt" style="left:1128px;top:513.5px;">2023-04-05</div>
<div class="li" style="left:850px;top:539px;">关于转发《国家自然科学基金委员会-可解</div><div class="dt" style="left:1128px;top:538.5px;">2023-04-04</div>
<div class="li" style="left:850px;top:564px;">关于转发《低渗透油气田勘探开发国家工程</div><div class="dt" style="left:1128px;top:563.5px;">2023-04-03</div>
<div class="li" style="left:850px;top:589px;">关于转发《2023年度国家自然科学基金委</div><div class="dt" style="left:1128px;top:588.5px;">2023-04-03</div>
<div class="li" style="left:850px;top:614px;">关于拨付2020年度高等学校哲学社会科学</div><div class="dt" style="left:1128px;top:613.5px;">2020-11-05</div>
<div class="li" style="left:850px;top:639px;">关于2020年度西安市社会科学规划基金项</div><div class="dt" style="left:1128px;top:638.5px;">2020-10-28</div>
<div class="li" style="left:850px;top:664px;">关于2020年度下半年陕西省教育厅科研计</div><div class="dt" style="left:1128px;top:663.5px;">2020-10-23</div>
<div class="li" style="left:850px;top:689px;">我校召开国家社科基金重大项目《辽宋西夏</div><div class="dt" style="left:1128px;top:688.5px;">2020-10-23</div>
<div class="li" style="left:850px;top:714px;">关于开展2020年度学生思想政治教育工作</div><div class="dt" style="left:1128px;top:713.5px;">2020-10-22</div>
<!-- ROW 3 titles -->
<div class="hbar" style="left:50px;top:776px;"></div><div class="htit" style="left:62px;top:774.2px;">教学信息</div><div class="more" style="left:376.8px;top:779px;">更多+</div>
<div class="hbar" style="left:450px;top:776px;"></div><div class="htit" style="left:462px;top:774.2px;">研究生培养</div><div class="more" style="left:776.8px;top:779px;">更多+</div>
<div class="hbar" style="left:850px;top:776px;"></div><div class="htit" style="left:862px;top:774.2px;">学术讲座</div><div class="more" style="left:1176.8px;top:779px;">更多+</div>
<!-- news caption -->
<div class="abs" style="left:50px;top:698px;width:358px;height:40px;background:#808080;"></div>
<div class="t t14" style="left:70px;top:708.5px;color:#fff;">我校与甘肃庆阳宁县开展基础教育合作办</div>
<div class="abs" style="left:357.5px;top:714.5px;width:11px;height:11px;border-radius:50%;background:#8c8c92;border:1.5px solid #ececf0;"></div>
<div class="abs" style="left:373.5px;top:714.5px;width:11px;height:11px;border-radius:50%;background:#e4e4e8;"></div>
<div class="abs" style="left:389.5px;top:714.5px;width:11px;height:11px;border-radius:50%;background:#e4e4e8;"></div>
</body>
</html>
